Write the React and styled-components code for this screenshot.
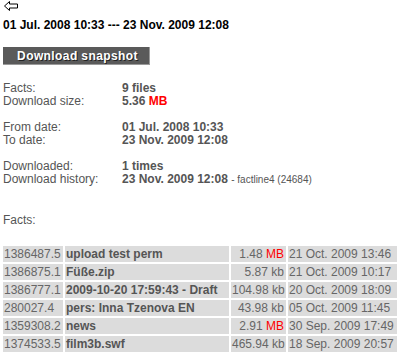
import React from "react";
import styled, { createGlobalStyle } from "styled-components";

const GlobalStyle = createGlobalStyle`
  body {
    margin: 0;
    background: #fff;
    font-family: "Liberation Sans", Arial, sans-serif;
    font-size: 12px;
    color: #555;
  }
`;

const Page = styled.div`
  padding: 1px 3px 0 3px;
`;

const BackLink = styled.a`
  display: block;
  width: 14px;
  height: 10px;
  margin-left: 1px;
  line-height: 0;
`;

const Title = styled.h1`
  margin: 7px 0 0 0;
  font-size: 12px;
  font-weight: bold;
  color: #000;
  line-height: 15px;
`;

const SnapshotButton = styled.button`
  display: block;
  margin: 14px 0 0 0;
  width: 147px;
  height: 18px;
  padding: 0 0 0 3px;
  background: #5a5a5a;
  border: none;
  border-right: 1px solid #9a9a9a;
  border-bottom: 1px solid #9a9a9a;
  color: #fff;
  font-family: "Liberation Sans", Arial, sans-serif;
  font-weight: bold;
  font-size: 12px;
  letter-spacing: 0.4px;
  text-shadow: 1px 1px 0 #222;
`;

const InfoGrid = styled.div`
  display: grid;
  grid-template-columns: 119px 1fr;
  margin-top: ${(p) => p.top}px;
  line-height: 13px;
`;

const Label = styled.div``;

const Value = styled.div`
  font-weight: bold;
`;

const Note = styled.span`
  font-weight: normal;
  font-size: 10px;
`;

const Red = styled.b`
  color: #f00;
  font-weight: ${(p) => (p.light ? "normal" : "bold")};
`;

const SectionLabel = styled.div`
  margin-top: 28px;
  line-height: 13px;
`;

const Table = styled.table`
  margin-top: 19px;
  border-collapse: separate;
  border-spacing: 0;
  width: 394px;
  table-layout: fixed;
  line-height: 16px;
`;

const Col = styled.col`
  width: ${(p) => p.w}px;
`;

const Cell = styled.td`
  background: #dcdcdc;
  padding: 0 2px 0 1px;
  border-right: 2px solid #fff;
  border-bottom: 2px solid #fff;
  white-space: nowrap;
  overflow: hidden;
  color: ${(p) => (p.bold ? "#555" : "#666")};
  font-weight: ${(p) => (p.bold ? "bold" : "normal")};
  text-align: ${(p) => (p.right ? "right" : "left")};
  &:last-child {
    border-right: none;
  }
`;

const facts = [
  ["1386487.5", "upload test perm", "1.48", "MB", "21 Oct. 2009 13:46"],
  ["1386875.1", "Füße.zip", "5.87", "kb", "21 Oct. 2009 10:17"],
  ["1386777.1", "2009-10-20 17:59:43 - Draft", "104.98", "kb", "20 Oct. 2009 18:09"],
  ["280027.4", "pers: Inna Tzenova EN", "43.98", "kb", "05 Oct. 2009 11:45"],
  ["1359308.2", "news", "2.91", "MB", "30 Sep. 2009 17:49"],
  ["1374533.5", "film3b.swf", "465.94", "kb", "18 Sep. 2009 20:57"],
];

const BackIcon = () => (
  <svg width="14" height="10" viewBox="0 0 14 10">
    <path
      d="M5.5 0.5 L0.5 5 L5.5 9.5 L5.5 7 L13.5 7 L13.5 3 L5.5 3 Z"
      fill="#fff"
      stroke="#000"
      strokeWidth="1"
    />
  </svg>
);

export default function App() {
  return (
    <Page>
      <GlobalStyle />
      <BackLink href="#">
        <BackIcon />
      </BackLink>
      <Title>01 Jul. 2008 10:33 --- 23 Nov. 2009 12:08</Title>
      <SnapshotButton>Download snapshot</SnapshotButton>

      <InfoGrid top={17}>
        <Label>Facts:</Label>
        <Value>9 files</Value>
        <Label>Download size:</Label>
        <Value>
          5.36 <Red>MB</Red>
        </Value>
      </InfoGrid>

      <InfoGrid top={13}>
        <Label>From date:</Label>
        <Value>01 Jul. 2008 10:33</Value>
        <Label>To date:</Label>
        <Value>23 Nov. 2009 12:08</Value>
      </InfoGrid>

      <InfoGrid top={13}>
        <Label>Downloaded:</Label>
        <Value>1 times</Value>
        <Label>Download history:</Label>
        <Value>
          23 Nov. 2009 12:08 <Note>- factline4 (24684)</Note>
        </Value>
      </InfoGrid>

      <SectionLabel>Facts:</SectionLabel>

      <Table>
        <colgroup>
          <Col w={62} />
          <Col w={166} />
          <Col w={57} />
          <Col w={109} />
        </colgroup>
        <tbody>
          {facts.map(([id, name, size, unit, date]) => (
            <tr key={id}>
              <Cell>{id}</Cell>
              <Cell bold>{name}</Cell>
              <Cell right>
                {size} {unit === "MB" ? <Red light>MB</Red> : unit}
              </Cell>
              <Cell>{date}</Cell>
            </tr>
          ))}
        </tbody>
      </Table>
    </Page>
  );
}
